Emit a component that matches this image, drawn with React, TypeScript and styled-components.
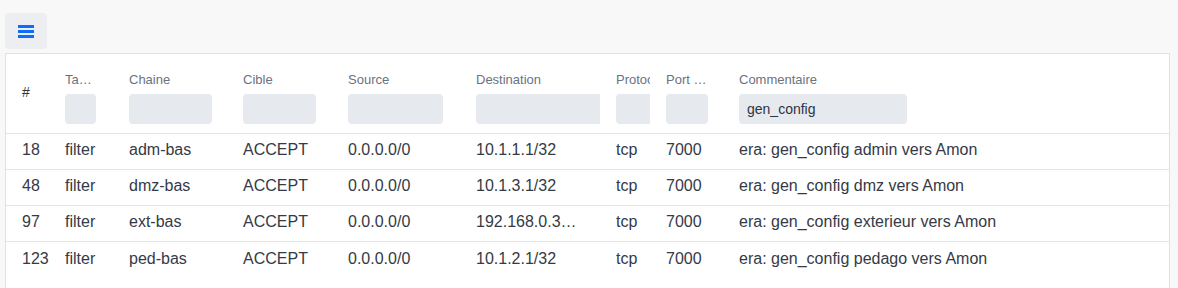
import React from "react";
import styled, { createGlobalStyle } from "styled-components";

const GlobalStyle = createGlobalStyle`
  html, body {
    margin: 0;
    padding: 0;
    background: #f8f8f8;
    font-family: "Liberation Sans", Arial, sans-serif;
  }
`;

const Page = styled.div`
  display: flex;
  flex-direction: column;
  padding: 13px 8px 0 5px;
  gap: 4px;
`;

const MenuButton = styled.button`
  width: 42px;
  height: 36px;
  border: none;
  border-radius: 4px;
  background: #eceef1;
  display: flex;
  align-items: center;
  justify-content: center;
  padding: 0;
  cursor: pointer;
`;

const Panel = styled.div`
  background: #fff;
  border: 1px solid #dfe1e4;
  padding-bottom: 24px;
`;

const COLS = "51px 64px 114px 105px 128px 140px 50px 73px 1fr";

const HeadRow = styled.div`
  display: grid;
  grid-template-columns: ${COLS};
  padding: 17px 0 9px;
  border-bottom: 1px solid #e3e5e8;
`;

const Row = styled.div`
  display: grid;
  grid-template-columns: ${COLS};
  height: 36px;
  box-sizing: border-box;
  padding-bottom: 3px;
  align-items: center;
  border-bottom: 1px solid #e3e5e8;
  &:last-child {
    border-bottom: none;
  }
`;

const HeadCell = styled.div`
  padding: 0 8px;
  min-width: 0;
`;

const HeadInner = styled.div`
  display: flex;
  flex-direction: column;
  gap: 5px;
  overflow: hidden;
`;

const HashCell = styled.div`
  padding-left: 16px;
  margin-top: 12px;
  font-size: 14px;
  line-height: 18px;
  color: #2e3440;
`;

const Label = styled.div<{ $w: number; $clip?: boolean }>`
  width: ${(p) => p.$w}px;
  font-size: 13px;
  line-height: 18px;
  color: #6b7280;
  white-space: nowrap;
  overflow: hidden;
  text-overflow: ${(p) => (p.$clip ? "clip" : "ellipsis")};
`;

const Filter = styled.div<{ $w: number }>`
  width: ${(p) => p.$w}px;
  flex-shrink: 0;
  height: 30px;
  border-radius: 4px;
  background: #e6e9ed;
  box-sizing: border-box;
  padding: 0 8px;
  display: flex;
  align-items: center;
  font-size: 14px;
  color: #2e3440;
`;

const Cell = styled.div<{ $first?: boolean; $narrow?: boolean }>`
  padding: 0 ${(p) => (p.$narrow ? "24px" : "8px")} 0 ${(p) => (p.$first ? "16px" : "8px")};
  font-size: 16px;
  color: #343a46;
  white-space: nowrap;
  overflow: hidden;
  text-overflow: ellipsis;
  min-width: 0;
`;

const columns = [
  { label: "Table", w: 31 },
  { label: "Chaine", w: 83 },
  { label: "Cible", w: 73 },
  { label: "Source", w: 95 },
  { label: "Destination", w: 140 },
  { label: "Protocole", w: 60, clip: true },
  { label: "Port destination", w: 42 },
  { label: "Commentaire", w: 168, value: "gen_config" },
];

const rows = [
  ["18", "filter", "adm-bas", "ACCEPT", "0.0.0.0/0", "10.1.1.1/32", "tcp", "7000", "era: gen_config admin vers Amon"],
  ["48", "filter", "dmz-bas", "ACCEPT", "0.0.0.0/0", "10.1.3.1/32", "tcp", "7000", "era: gen_config dmz vers Amon"],
  ["97", "filter", "ext-bas", "ACCEPT", "0.0.0.0/0", "192.168.0.31/32", "tcp", "7000", "era: gen_config exterieur vers Amon"],
  ["123", "filter", "ped-bas", "ACCEPT", "0.0.0.0/0", "10.1.2.1/32", "tcp", "7000", "era: gen_config pedago vers Amon"],
];

function MenuIcon() {
  return (
    <svg width="16" height="13" viewBox="0 0 16 13">
      <rect x="0" y="0" width="16" height="3" fill="#0d6efd" />
      <rect x="0" y="5" width="16" height="3" fill="#0d6efd" />
      <rect x="0" y="10" width="16" height="3" fill="#0d6efd" />
    </svg>
  );
}

export default function App() {
  return (
    <>
      <GlobalStyle />
      <Page>
        <MenuButton>
          <MenuIcon />
        </MenuButton>
        <Panel>
          <HeadRow>
            <HashCell>#</HashCell>
            {columns.map((c) => (
              <HeadCell key={c.label}>
                <HeadInner>
                  <Label $w={c.w} $clip={c.clip}>
                    {c.label}
                  </Label>
                  <Filter $w={c.w}>{c.value}</Filter>
                </HeadInner>
              </HeadCell>
            ))}
          </HeadRow>
          {rows.map((r) => (
            <Row key={r[0]}>
              {r.map((v, i) => (
                <Cell key={i} $first={i === 0} $narrow={i === 5}>
                  {v}
                </Cell>
              ))}
            </Row>
          ))}
        </Panel>
      </Page>
    </>
  );
}
